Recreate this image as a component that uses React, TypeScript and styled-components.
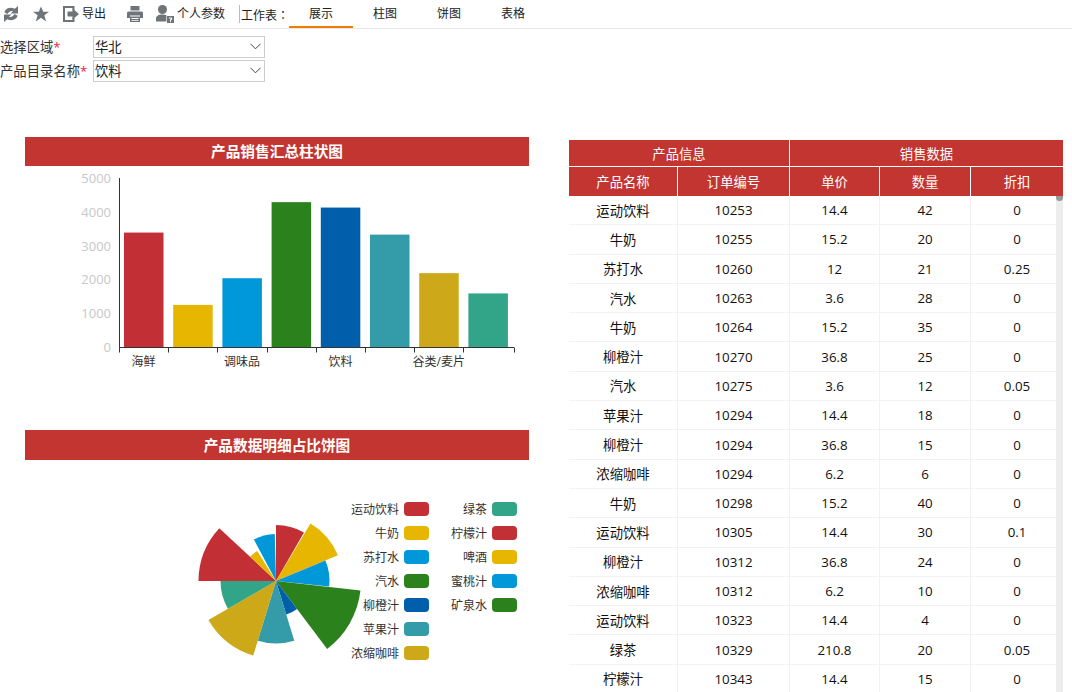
import React from 'react';
import styled, { createGlobalStyle } from 'styled-components';

const GlobalStyle = createGlobalStyle`
  html, body {
    margin: 0;
    padding: 0;
    height: 100%;
    overflow: hidden;
    background: #fff;
  }
  body {
    font-family: "Open Sans", "Noto Sans CJK SC", sans-serif;
    font-size: 13.33px;
    color: #222;
  }
`;

const Page = styled.div`
  width: 1072px;
  height: 692px;
  overflow: hidden;
`;

const Toolbar = styled.div`
  height: 28px;
  display: flex;
  align-items: stretch;
  border-bottom: 1px solid #e8e8e8;
  box-sizing: content-box;
`;

const ToolGroup = styled.div`
  display: flex;
  align-items: center;
  box-sizing: border-box;
  padding-left: 4px;
  width: 239px;
  flex: none;
`;

const ToolButton = styled.div<{ $w: number }>`
  width: ${p => p.$w}px;
  flex: none;
  display: flex;
  align-items: center;
  gap: 3px;
  font-size: 12px;
  line-height: 28px;
  color: #222;
  white-space: nowrap;
`;

const SheetLabel = styled.div`
  width: 50px;
  flex: none;
  box-sizing: border-box;
  padding-left: 1px;
  margin-top: 5px;
  height: 18px;
  line-height: 20px;
  font-family: "Noto Sans CJK TC", sans-serif;
  font-size: 12px;
  border-left: 1px solid #bbb;
  white-space: nowrap;
`;

const Tab = styled.div<{ $active?: boolean }>`
  width: 64px;
  flex: none;
  text-align: center;
  font-size: 12px;
  line-height: 28px;
  height: 28px;
  box-sizing: border-box;
  border-bottom: 2px solid ${p => (p.$active ? '#f07d00' : 'transparent')};
`;

const Form = styled.div`
  padding-top: 7px;
  height: 107px;
  box-sizing: border-box;
  display: flex;
  flex-direction: column;
  gap: 3px;
`;

const FormRow = styled.div`
  display: flex;
  align-items: center;
  height: 21px;
`;

const FieldLabel = styled.div`
  width: 93px;
  flex: none;
  color: #333;
  white-space: nowrap;
`;

const Required = styled.span`
  color: #f0203c;
`;

const SelectBox = styled.div`
  width: 172px;
  height: 22px;
  box-sizing: border-box;
  border: 1px solid #ccc;
  display: flex;
  align-items: center;
  justify-content: space-between;
  padding: 0 3px 0 1px;
  color: #222;
`;

const Content = styled.div`
  display: flex;
  align-items: flex-start;
  padding-left: 25px;
`;

const ChartColumn = styled.div`
  width: 504px;
  flex: none;
  padding-top: 1px;
  margin-right: 40px;
`;

const ChartTitle = styled.div`
  height: 29px;
  background: #c23531;
  color: #fff;
  font-size: 14.67px;
  font-weight: 700;
  line-height: 29px;
  text-align: center;
`;

const PieTitle = styled(ChartTitle)`
  height: 30px;
  line-height: 30px;
`;

const BarArea = styled.div`
  height: 264px;
`;

const PieArea = styled.div`
  display: flex;
  height: 232px;
`;

const ChartSvg = styled.svg`
  display: block;
  flex: none;
  overflow: visible;
`;

const Legend = styled.div`
  margin-top: 42px;
  display: flex;
  align-items: flex-start;
  flex: none;
`;

const LegendColumn = styled.div<{ $w: number }>`
  width: ${p => p.$w}px;
  display: flex;
  flex-direction: column;
  gap: 10px;
`;

const LegendItem = styled.div`
  height: 14px;
  display: flex;
  align-items: center;
  justify-content: flex-end;
  gap: 5px;
  font-size: 12px;
  color: #333;
  white-space: nowrap;
`;

const Swatch = styled.span<{ $color: string }>`
  width: 25px;
  height: 14px;
  border-radius: 4px;
  background: ${p => p.$color};
  flex: none;
`;

const TableWrap = styled.div`
  width: 494px;
  flex: none;
  margin-top: 4px;
  position: relative;
  height: 552px;
  overflow: hidden;
`;

const DataTable = styled.table`
  width: 494px;
  border-collapse: separate;
  border-spacing: 0;
  table-layout: fixed;
`;

const HeadCell = styled.th`
  background: #c23531;
  color: #fff;
  font-weight: 400;
  text-align: center;
  padding: 0;
  border-right: 1px solid #fff;
  border-bottom: 1px solid #fff;
  height: 26px;
  &:last-child {
    border-right: 0;
  }
`;

const SubHeadCell = styled(HeadCell)`
  height: 29px;
  border-bottom: 0;
`;

const BodyCell = styled.td`
  height: 28.3px;
  padding: 0;
  text-align: center;
  color: #111;
  border-right: 1px solid #f2f2f2;
  border-bottom: 1px solid #f2f2f2;
  box-sizing: content-box;
  &:last-child {
    border-right: 0;
  }
`;

const ScrollTrack = styled.div`
  position: absolute;
  right: 0;
  top: 56px;
  bottom: 0;
  width: 7px;
  background: #ededed;
`;

const ScrollThumb = styled.div`
  height: 5px;
  background: #999;
  border-radius: 0 0 4px 4px;
`;

const palette = ['#c23035', '#e6b600', '#0098d9', '#2b821d', '#005eaa', '#339ca8', '#cda819', '#32a487'];

const bars = [
  { name: '海鲜', value: 3400 },
  { name: '', value: 1260 },
  { name: '调味品', value: 2050 },
  { name: '', value: 4300 },
  { name: '饮料', value: 4140 },
  { name: '', value: 3340 },
  { name: '谷类/麦片', value: 2200 },
  { name: '', value: 1600 },
];

const BarChart: React.FC = () => {
  const x0 = 94;
  const base = 181.5;
  const step = 49.2;
  const scale = 169 / 5000;
  return (
    <ChartSvg width={504} height={264}>
      {[0, 1000, 2000, 3000, 4000, 5000].map(t => (
        <text key={t} x={86} y={base - t * scale + 4.5} fontSize={13} fill="#c8c8c8" textAnchor="end">
          {t}
        </text>
      ))}
      {bars.map((b, i) => {
        const h = b.value * scale;
        return <rect key={i} x={x0 + 5 + i * step} y={base - h} width={39.5} height={h} fill={palette[i]} />;
      })}
      <path d={`M94.5 12V${base}H489`} fill="none" stroke="#333" />
      {bars.map((_, i) => (
        <path key={i} d={`M${Math.round(x0 + i * step) + 0.5} ${base}v5`} stroke="#333" />
      ))}
      <path d={`M489.5 ${base}v5`} stroke="#333" />
      {bars.map((b, i) =>
        b.name ? (
          <text key={i} x={x0 + 24.6 + i * step} y={200} fontSize={12} fill="#333" textAnchor="middle">
            {b.name}
          </text>
        ) : null,
      )}
    </ChartSvg>
  );
};

const sectors = [
  { from: 0, to: 30, r: 56, c: 0 },
  { from: 31, to: 67.5, r: 67, c: 1 },
  { from: 67.5, to: 96, r: 53.5, c: 2 },
  { from: 96.5, to: 143, r: 85, c: 3 },
  { from: 143, to: 163, r: 35, c: 4 },
  { from: 163, to: 197, r: 62.5, c: 5 },
  { from: 197, to: 240, r: 78, c: 6 },
  { from: 240, to: 270, r: 55.5, c: 7 },
  { from: 270, to: 313, r: 77.5, c: 0 },
  { from: 313, to: 328, r: 35.5, c: 1 },
  { from: 332, to: 358.5, r: 47, c: 2 },
];

const polar = (cx: number, cy: number, r: number, deg: number) => {
  const a = (deg * Math.PI) / 180;
  return `${(cx + r * Math.sin(a)).toFixed(2)} ${(cy - r * Math.cos(a)).toFixed(2)}`;
};

const RoseChart: React.FC = () => {
  const cx = 251;
  const cy = 121;
  return (
    <ChartSvg width={326} height={232}>
      {sectors.map((s, i) => (
        <path
          key={i}
          d={`M${cx} ${cy}L${polar(cx, cy, s.r, s.from)}A${s.r} ${s.r} 0 0 1 ${polar(cx, cy, s.r, s.to)}Z`}
          fill={palette[s.c]}
        />
      ))}
    </ChartSvg>
  );
};

const legendLeft = [
  { name: '运动饮料', c: 0 },
  { name: '牛奶', c: 1 },
  { name: '苏打水', c: 2 },
  { name: '汽水', c: 3 },
  { name: '柳橙汁', c: 4 },
  { name: '苹果汁', c: 5 },
  { name: '浓缩咖啡', c: 6 },
];

const legendRight = [
  { name: '绿茶', c: 7 },
  { name: '柠檬汁', c: 0 },
  { name: '啤酒', c: 1 },
  { name: '蜜桃汁', c: 2 },
  { name: '矿泉水', c: 3 },
];

const rows: [string, number, string, number, string][] = [
  ['运动饮料', 10253, '14.4', 42, '0'],
  ['牛奶', 10255, '15.2', 20, '0'],
  ['苏打水', 10260, '12', 21, '0.25'],
  ['汽水', 10263, '3.6', 28, '0'],
  ['牛奶', 10264, '15.2', 35, '0'],
  ['柳橙汁', 10270, '36.8', 25, '0'],
  ['汽水', 10275, '3.6', 12, '0.05'],
  ['苹果汁', 10294, '14.4', 18, '0'],
  ['柳橙汁', 10294, '36.8', 15, '0'],
  ['浓缩咖啡', 10294, '6.2', 6, '0'],
  ['牛奶', 10298, '15.2', 40, '0'],
  ['运动饮料', 10305, '14.4', 30, '0.1'],
  ['柳橙汁', 10312, '36.8', 24, '0'],
  ['浓缩咖啡', 10312, '6.2', 10, '0'],
  ['运动饮料', 10323, '14.4', 4, '0'],
  ['绿茶', 10329, '210.8', 20, '0.05'],
  ['柠檬汁', 10343, '14.4', 15, '0'],
];

const Icon = styled.svg`
  display: block;
  flex: none;
  fill: #6f7479;
`;

const Chevron: React.FC = () => (
  <svg width={11} height={7} viewBox="0 0 11 7" fill="none" stroke="#444" strokeWidth={1}>
    <path d="M.5 .8 5.5 5.8 10.5 .8" />
  </svg>
);

const App: React.FC = () => (
  <Page>
    <GlobalStyle />
    <Toolbar>
      <ToolGroup>
        <ToolButton $w={29}>
          <Icon width={14} height={16} viewBox="0 0 14 16">
            <path d="M14 0V7.500H6.500L9 5.200C7 4.500 5 5.500 3.500 8L.3 6.200C2 2 6.500.8 10.800 2.800Z" />
            <path d="M0 16V8.500H7.500L5 10.800C7 11.500 9 10.500 10.500 8L13.700 9.800C12 14 7.500 15.200 3.200 13.200Z" />
          </Icon>
        </ToolButton>
        <ToolButton $w={30}>
          <Icon width={16} height={16} viewBox="0 0 18 17">
            <path d="M9 0l2.500 6H18l-5.200 4 2 7L9 12.800 3.200 17l2-7L0 6h6.500z" />
          </Icon>
        </ToolButton>
        <ToolButton $w={64}>
          <Icon width={16} height={16} viewBox="0 0 16 16">
            <path d="M0 0h11.500v4.500h-2V2h-7.500v12h7.500v-2.500h2V16H0z" />
            <path d="M4.500 5.500h5V2.500L16 8l-6.500 5.500v-3h-5z" />
          </Icon>
          导出
        </ToolButton>
        <ToolButton $w={29}>
          <Icon width={16} height={16} viewBox="0 0 16 16">
            <path d="M3.500 0h9v4.500h-9z" />
            <path d="M1.500 5.500h13A1.500 1.500 0 0 1 16 7v5h-3V9.500H3V12H0V7A1.500 1.500 0 0 1 1.500 5.500z" />
            <path d="M3 10.500h10V16H3zM4.500 12v1h7v-1zM4.500 14v.7h7V14z" fillRule="evenodd" />
          </Icon>
        </ToolButton>
        <ToolButton $w={69}>
          <Icon width={18} height={18} viewBox="0 0 18 18">
            <circle cx={6.500} cy={4.500} r={4.500} />
            <path d="M0 16.500v-3C0 11 2.500 9.500 6.500 9.500c1.500 0 2.800.2 3.900.6V16.500z" />
            <path d="M11 11h7v7h-7z" />
            <path d="M13 12.600h3v2.400h-1v1h-1v-1.800h1v-.7h-2zM14 16.300h1v.9h-1z" fill="#fff" />
          </Icon>
          个人参数
        </ToolButton>
      </ToolGroup>
      <SheetLabel>工作表：</SheetLabel>
      <Tab $active>展示</Tab>
      <Tab>柱图</Tab>
      <Tab>饼图</Tab>
      <Tab>表格</Tab>
    </Toolbar>
    <Form>
      <FormRow>
        <FieldLabel>
          选择区域<Required>*</Required>
        </FieldLabel>
        <SelectBox>
          华北
          <Chevron />
        </SelectBox>
      </FormRow>
      <FormRow>
        <FieldLabel>
          产品目录名称<Required>*</Required>
        </FieldLabel>
        <SelectBox>
          饮料
          <Chevron />
        </SelectBox>
      </FormRow>
    </Form>
    <Content>
      <ChartColumn>
        <ChartTitle>产品销售汇总柱状图</ChartTitle>
        <BarArea>
          <BarChart />
        </BarArea>
        <PieTitle>产品数据明细占比饼图</PieTitle>
        <PieArea>
          <RoseChart />
          <Legend>
            <LegendColumn $w={78}>
              {legendLeft.map(l => (
                <LegendItem key={l.name}>
                  {l.name}
                  <Swatch $color={palette[l.c]} />
                </LegendItem>
              ))}
            </LegendColumn>
            <LegendColumn $w={88}>
              {legendRight.map(l => (
                <LegendItem key={l.name}>
                  {l.name}
                  <Swatch $color={palette[l.c]} />
                </LegendItem>
              ))}
            </LegendColumn>
          </Legend>
        </PieArea>
      </ChartColumn>
      <TableWrap>
        <DataTable>
          <colgroup>
            <col style={{ width: 109 }} />
            <col style={{ width: 112 }} />
            <col style={{ width: 90 }} />
            <col style={{ width: 91 }} />
            <col style={{ width: 92 }} />
          </colgroup>
          <thead>
            <tr>
              <HeadCell colSpan={2}>产品信息</HeadCell>
              <HeadCell colSpan={3}>销售数据</HeadCell>
            </tr>
            <tr>
              <SubHeadCell>产品名称</SubHeadCell>
              <SubHeadCell>订单编号</SubHeadCell>
              <SubHeadCell>单价</SubHeadCell>
              <SubHeadCell>数量</SubHeadCell>
              <SubHeadCell>折扣</SubHeadCell>
            </tr>
          </thead>
          <tbody>
            {rows.map((r, i) => (
              <tr key={i}>
                {r.map((v, j) => (
                  <BodyCell key={j}>{v}</BodyCell>
                ))}
              </tr>
            ))}
          </tbody>
        </DataTable>
        <ScrollTrack>
          <ScrollThumb />
        </ScrollTrack>
      </TableWrap>
    </Content>
  </Page>
);

export default App;
